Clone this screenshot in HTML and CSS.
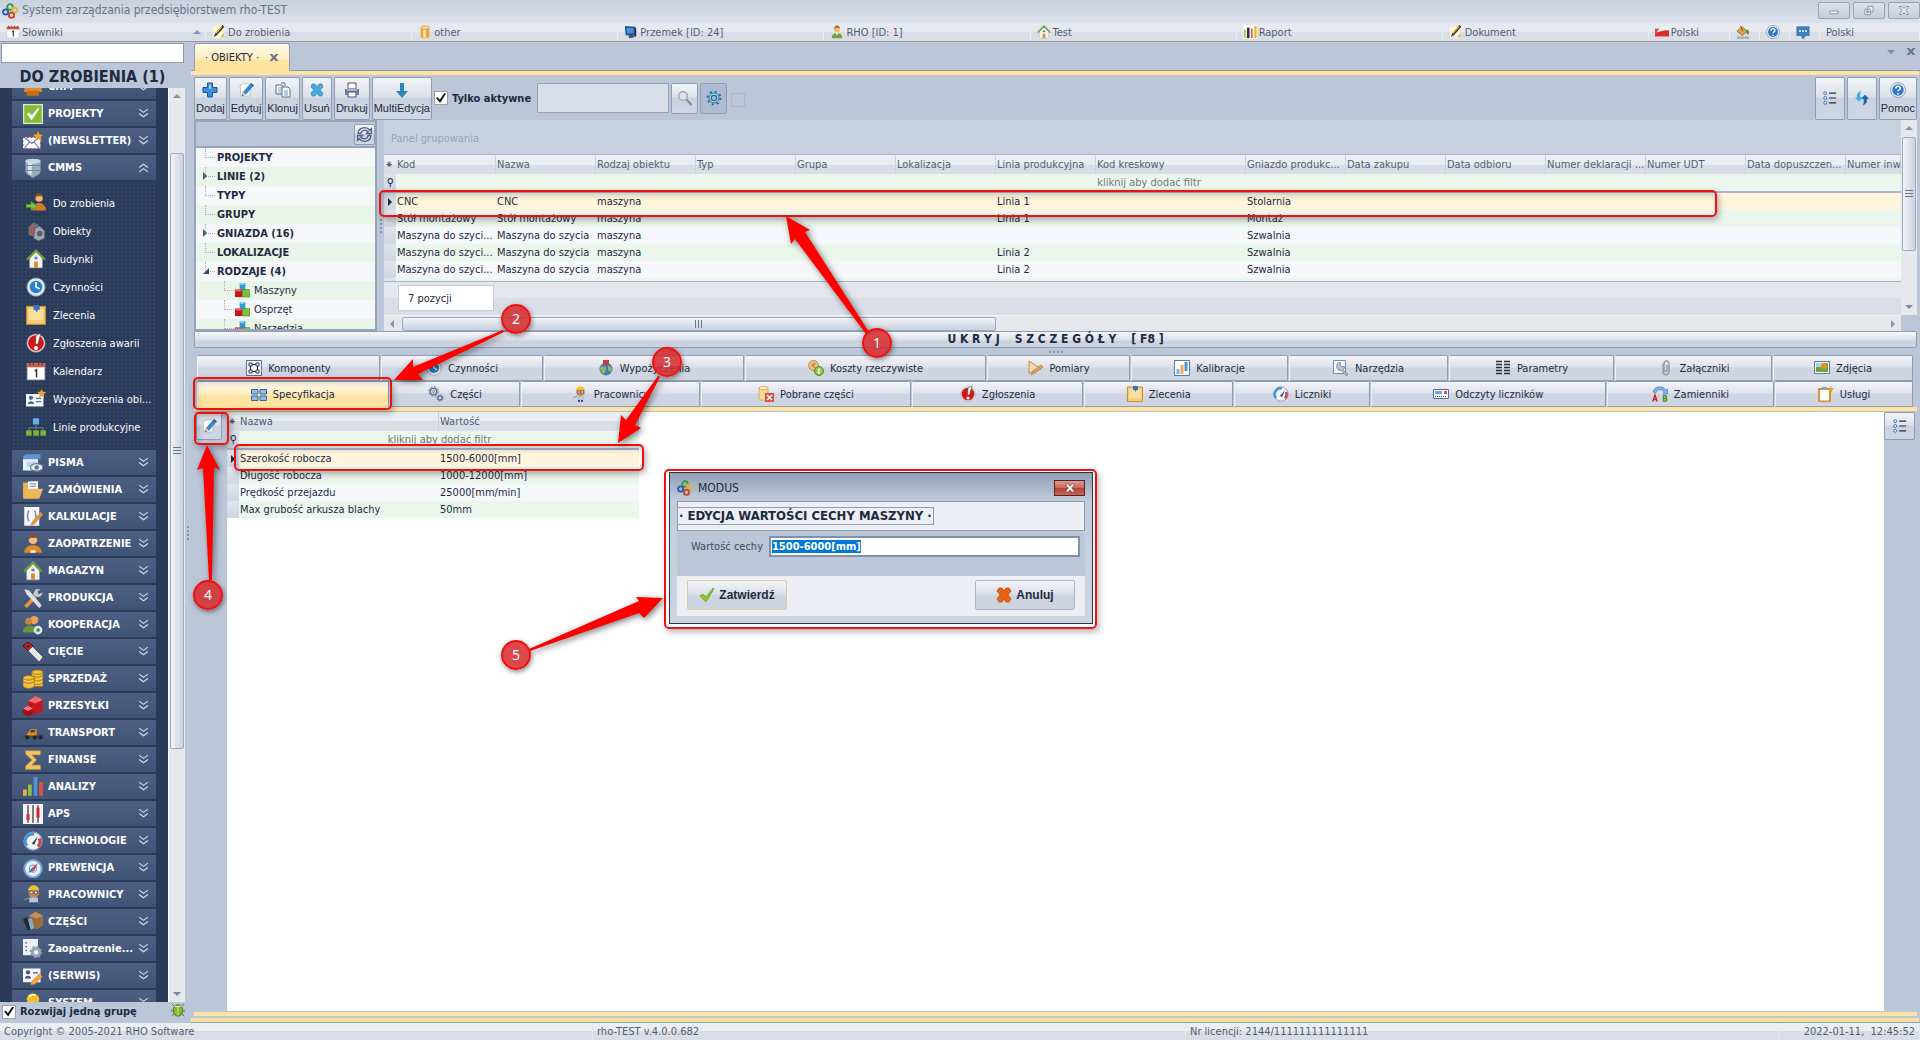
FILE: index.html
```html
<!DOCTYPE html>
<html lang="pl">
<head>
    <meta charset="utf-8">
    <meta name="viewport" content="width=device-width, initial-scale=1">
    <title>System zarządzania przedsiębiorstwem rho-TEST</title>
    <link rel="stylesheet" href="styles.css">
</head>
<body>
<svg class="sprite" aria-hidden="true">
    <symbol id="logo" viewBox="0 0 16 16"><g fill="none" stroke-width="1.8"><circle cx="8" cy="4" r="2.800" stroke="#2f9a3c"/><circle cx="3.600" cy="9" r="2.600" stroke="#2a56b5"/><circle cx="12.400" cy="7" r="2.600" stroke="#e0b52c"/><circle cx="9.500" cy="12.300" r="2.600" stroke="#cc4422"/></g></symbol>
    <symbol id="calendar" viewBox="0 0 16 16"><path d="M1 2h14v13H1z" fill="#fdfdfd" stroke="#b8bccb" stroke-width=".6"/><path d="M1 2h14v3H1z" fill="#d3523c"/><path d="M3 1v2M6 1v2M10 1v2M13 1v2" stroke="#7a2c20"/><path d="M7 8l1.4-1v6" fill="none" stroke="#333" stroke-width="1.2"/></symbol>
    <symbol id="pencil" viewBox="0 0 16 16"><path d="M1 2l12 0v13H1z" fill="#fbf7df"/><path d="M2 14l2-5 8-9 2 2-8 9z" fill="#2b2b2b"/><path d="M4 9l7-8 1 1-7 8z" fill="#f0c020"/><path d="M9 14l5-5-1 5z" fill="#cabb6a"/></symbol>
    <symbol id="db" viewBox="0 0 16 16"><path d="M3 3v10c0 3 10 3 10 0V3z" fill="#e9a63a"/><path d="M6 3v11.500h3V3z" fill="#fbe3ae"/><ellipse cx="8" cy="3" rx="5" ry="2" fill="#fbdc9b" stroke="#b87a1c" stroke-width=".6"/></symbol>
    <symbol id="monitor" viewBox="0 0 16 16"><path d="M1 1l12 1v9L2 12z" fill="#1d4f94"/><path d="M3 3l8 .5v6L3.500 10z" fill="#4c8fd9"/><path d="M12 2l2 2v9h-3v-2h1z" fill="#30343c"/><path d="M5 12l5-1 2 3-6 1z" fill="#454b58"/></symbol>
    <symbol id="user" viewBox="0 0 16 16"><circle cx="8" cy="5" r="3.300" fill="#efb77a"/><path d="M4.500 5c0-6 7-6 7 0l-1-2H6z" fill="#a86420"/><path d="M2 15c0-5 3-6 6-6s6 1 6 6z" fill="#6da33a"/><path d="M6.500 9L8 12l1.500-3z" fill="#fff"/></symbol>
    <symbol id="agent" viewBox="0 0 16 16"><circle cx="8" cy="4.500" r="3.500" fill="#f3bd84"/><path d="M4.300 5c0-6 7.400-6 7.400 0l-1-2H6z" fill="#8f4a18"/><path d="M1 15c0-4 3-6 7-6s7 2 7 6z" fill="#e08a22"/><path d="M6 13h4v2H6z" fill="#fff3d6"/></symbol>
    <symbol id="agentgo" viewBox="0 0 16 16"><circle cx="10.500" cy="4" r="3" fill="#f0b67c"/><path d="M7.300 4c0-5 6.400-5 6.400 0l-1-1.500H9z" fill="#94501d"/><path d="M5 14c0-4 3-6 5.500-6S16 10 16 14z" fill="#d27b25"/><path d="M0 9h4V6.500L9 10.500 4 14v-2.500H0z" fill="#7cc242" stroke="#47861e" stroke-width=".5"/></symbol>
    <symbol id="house" viewBox="0 0 16 16"><path d="M3 7l5-5 5 5v8H3z" fill="#f6f3ea" stroke="#b4b9c6" stroke-width=".5"/><path d="M.8 8.500L8 1.300l7.200 7.200" fill="none" stroke="#6d9c39" stroke-width="1.700"/><path d="M6.500 10h3v5h-3z" fill="#d88a3f"/><path d="M6.800 6.200h2.400v2H6.800z" fill="#4b7ed1"/></symbol>
    <symbol id="bars" viewBox="0 0 16 16"><path d="M0 0h16v16H0z" fill="#fff"/><path d="M1 5h2v10H1z" fill="#a7c520"/><path d="M4.500 3h3v12h-3z" fill="#28324b"/><path d="M9 4h2v11H9z" fill="#d9574e"/><path d="M13 1h2.500v14H13z" fill="#edb800"/></symbol>
    <symbol id="flag" viewBox="0 0 16 16"><path d="M0 3c5 2 9-2 16 0v10H0z" fill="#f4f4f4"/><path d="M0 9c5-1 8-3 16-3v7H0z" fill="#d92c2c"/><path d="M0 4l5 0-5 8z" fill="#e25151"/></symbol>
    <symbol id="paint" viewBox="0 0 16 16"><path d="M1 7l6-5 6 5-6 5z" fill="#e2a343" stroke="#7d4e14" stroke-width=".7"/><path d="M5 1l3 6" stroke="#6d401b"/><path d="M12 5c4 1 3 4 2 6-2 0-3-4-2-6z" fill="#4c9a2f"/><path d="M1 13h14v3H1z" fill="#aeb2b8"/></symbol>
    <symbol id="help" viewBox="0 0 16 16"><circle cx="8" cy="8" r="7.500" fill="#e8edf5" stroke="#76829a" stroke-width=".7"/><circle cx="8" cy="8" r="5.700" fill="#2f76cd"/><path d="M5.800 6.500c0-3 4.500-3 4.500-.3C10.300 8 8 7.800 8 9.500M8 11v1.500" fill="none" stroke="#fff" stroke-width="1.500"/></symbol>
    <symbol id="chat" viewBox="0 0 16 16"><path d="M1 2h14v10h-4l-3 4-2-4H1z" fill="#3b83c0" stroke="#285d95" stroke-width=".7"/><path d="M3.500 6h2v2h-2zM7 6h2v2H7zM10.500 6h2v2h-2z" fill="#eef"/></symbol>
    <symbol id="plus" viewBox="0 0 16 16"><path d="M5.500 1h5v4.500H15v5h-4.500V15h-5v-4.500H1v-5h4.500z" fill="#3d8fdd" stroke="#17559c"/><path d="M7 2.500h2v4.500H7z" fill="#9bd0fa"/></symbol>
    <symbol id="edit" viewBox="0 0 16 16"><path d="M2 3l7-2 3 2v11H3z" fill="#fff" stroke="#a9adb5" stroke-width=".7"/><path d="M4 14l1-4 7-8 3 2.500-7 8z" fill="#2d86d8"/><path d="M4 14l1-4 3 2.500z" fill="#e9c792"/><path d="M4 14l.5-1.500 1 .8z" fill="#222"/><path d="M12 2l1-1 3 2.500-1 1z" fill="#244a79"/></symbol>
    <symbol id="clone" viewBox="0 0 16 16"><path d="M1 3h6l2 2v7H1z" fill="#f4f8fc" stroke="#54718e"/><path d="M3 6h4M3 8h4M3 10h4" stroke="#7693ae" stroke-width=".8"/><path d="M6 1h4v3M9 5h4l2 2v8H7V5z" fill="#fff" stroke="#54718e"/><path d="M9 9h4M9 11h4M9 13h4" stroke="#3e7cb1" stroke-width=".8"/></symbol>
    <symbol id="cross" viewBox="0 0 16 16"><path d="M3 2l3 0 2 3 2-3h3l1 3-3 3 3 3-1 3h-3l-2-3-2 3H3l-1-3 3-3-3-3z" fill="#49a9dc" stroke="#217db5" stroke-width=".6"/></symbol>
    <symbol id="printer" viewBox="0 0 16 16"><path d="M4 1h8v6H4z" fill="#fff" stroke="#556"/><path d="M1 7h14v6H1z" fill="#6c7ea4"/><path d="M4 10h8v5H4z" fill="#fff" stroke="#44558a"/><path d="M3 8h10" stroke="#dfe6f4"/></symbol>
    <symbol id="down" viewBox="0 0 16 16"><path d="M6 1h4v8h4l-6 7-6-7h4z" fill="#2c88b6"/></symbol>
    <symbol id="lens" viewBox="0 0 16 16"><circle cx="6" cy="6" r="4.300" fill="#dfe1e5" stroke="#9b9fa8" stroke-width="1.300"/><path d="M9.500 9.500l5 5.500" stroke="#8b8e95" stroke-width="2.200"/></symbol>
    <symbol id="gear" viewBox="0 0 16 16"><circle cx="8" cy="8" r="6.500" fill="none" stroke="#186b97" stroke-width="1.800" stroke-dasharray="2 3.105"/><circle cx="8" cy="8" r="5" fill="#b9d9ea" stroke="#1b79a8" stroke-width="1"/><circle cx="8" cy="8" r="2.700" fill="#adbcd2" stroke="#1b6c99" stroke-width="1.200"/></symbol>
    <symbol id="list" viewBox="0 0 16 16"><g fill="#dcebfb" stroke="#3c6db4"><circle cx="2.500" cy="2.500" r="1.700"/><circle cx="2.500" cy="8" r="1.700"/><circle cx="2.500" cy="13.500" r="1.700"/></g><path d="M7 2.500h8M7 8h8M7 13.500h8" stroke="#222c3c" stroke-width="1.400"/></symbol>
    <symbol id="sync" viewBox="0 0 16 16"><path d="M7 0C3 1 2 4 2.500 7H0l4.500 5L9 7H6.200C5.500 4.500 6 2 7 0z" fill="#3eb0ec"/><path d="M9 16c4-1 5-4 4.500-7H16l-4.500-5L7 9h2.800c.7 2.500.2 5-.8 7z" fill="#1666a8"/></symbol>
    <symbol id="refresh" viewBox="0 0 16 16"><g fill="none" stroke="#51628b" stroke-width="1.300"><path d="M2 7c0-6 8-7 11-3l1.500-1.500V7H10l1.500-1.500C9 3 5 4 4.500 7z"/><path d="M14 9c0 6-8 7-11 3l-1.500 1.500V9H6l-1.500 1.500C7 13 11 12 11.500 9z"/></g></symbol>
    <symbol id="cubes" viewBox="0 0 16 16"><path d="M5 0h6v8H5z" fill="#2a9bd5"/><path d="M5 0h6l-2 2H6z" fill="#8bd0ef"/><path d="M0 7h8v8H0z" fill="#c8141c"/><path d="M8 7h8v8H8z" fill="#7bbf3a" stroke="#3c7c1e" stroke-width=".5"/><path d="M0 7h8L6 9H1z" fill="#ee6464"/></symbol>
    <symbol id="check" viewBox="0 0 16 16"><path d="M1 9l3-2 3 3 7-9 1 1-8 13z" fill="#8cc821" stroke="#5c9a12" stroke-width=".6"/></symbol>
    <symbol id="cancel" viewBox="0 0 16 16"><path d="M3 1h3l2 3 2-3h3l2 3-3 4 3 4-2 3h-3l-2-3-2 3H3l-2-3 3-4-3-4z" fill="#e8630f" stroke="#b04405" stroke-width=".7"/></symbol>
    <symbol id="gift" viewBox="0 0 16 16"><path d="M1 8h14v4H1z" fill="#e18a26"/><path d="M3 11h10v4H3z" fill="#c66e15"/><circle cx="8" cy="6" r="3" fill="#e9a04a"/></symbol>
    <symbol id="tick" viewBox="0 0 16 16"><path d="M.5.500h15v15H.500z" fill="#84bd38" stroke="#d9e9c0"/><path d="M3 8l2-1 2 2 5-6 1 1-6 9z" fill="#fff"/></symbol>
    <symbol id="mail" viewBox="0 0 16 16"><path d="M0 5h14v9H0z" fill="#fff" stroke="#d0495a" stroke-dasharray="1.500 1.500"/><path d="M1 5l6 5 6-5M1 14l4-5M13 14L9 9" fill="none" stroke="#5577b5" stroke-width=".9"/><path d="M12 0l1 2.500L16 3l-2 2 1 3-3-2-2 2 0-3-2-2 3-.5z" fill="#f0a02a"/></symbol>
    <symbol id="tank" viewBox="0 0 16 16"><path d="M2 2v9c1 3 4 3 6 5 2-2 5-2 6-5V2z" fill="#9aa9b8"/><path d="M4 3v9l3 2V3z" fill="#dbe6ef"/><ellipse cx="8" cy="2.500" rx="6" ry="2" fill="#cdd8e2"/><path d="M2 6h12M2 10h12" stroke="#5f8fc0" stroke-width=".8"/></symbol>
    <symbol id="machine" viewBox="0 0 16 16"><path d="M2 5l4-4 4 2v11l-8-3z" fill="#68737f"/><path d="M7 6l4-2 4 4v6l-5 2-4-2z" fill="#9aa6b3" stroke="#444d59" stroke-width=".6"/><path d="M4 4v7M6 3v8" stroke="#c64d3c"/><circle cx="11" cy="10" r="2.200" fill="#56616d"/></symbol>
    <symbol id="clock" viewBox="0 0 16 16"><circle cx="8" cy="8" r="7.300" fill="#e4e9ef" stroke="#8892a3" stroke-width=".6"/><circle cx="8" cy="8" r="5" fill="#2480d3"/><path d="M8 4v4l3 1.500" fill="none" stroke="#fff" stroke-width="1.300"/></symbol>
    <symbol id="note" viewBox="0 0 16 16"><path d="M.5 1h15v14.500H.5z" fill="#f6cd79" stroke="#c78a2c"/><path d="M2 3h12v9H2z" fill="#fbdf9f"/><path d="M6 0h5v4H9.500L8.500 6 7.500 4H6z" fill="#3d73b8"/></symbol>
    <symbol id="alarm" viewBox="0 0 16 16"><circle cx="8" cy="8" r="7.300" fill="#e6e6e6" stroke="#9a9a9a" stroke-width=".5"/><circle cx="8" cy="8" r="6.300" fill="#d5141a"/><path d="M8 2l4-2-2.500 9h-2z" fill="#fff" stroke="#333" stroke-width=".5"/><circle cx="8" cy="12" r="1.600" fill="#fff"/></symbol>
    <symbol id="card" viewBox="0 0 16 16"><path d="M0 4h14v10H0z" fill="#f3f6fb"/><circle cx="4" cy="7" r="1.700" fill="#4b699c"/><path d="M1.500 12c0-3 5-3 5 0zM8 7h4v1H8zM8 9.500h4v1H8z" fill="#4b699c"/><path d="M12.500 0l1 2 2.500.5-2 2 .5 2.500-2-1.500-2 1.500.5-2.500-2-2 2.500-.5z" fill="#eea02c"/></symbol>
    <symbol id="cardedit" viewBox="0 0 16 16"><path d="M0 2h14v11H0z" fill="#f3f6fb"/><circle cx="4" cy="5" r="1.700" fill="#42577f"/><path d="M1.500 10c0-3 5-3 5 0zM8 5h4v1H8z" fill="#42577f"/><path d="M6 15l1-3 6-6 2.500 2.500-6 6z" fill="#eda23b"/></symbol>
    <symbol id="lines" viewBox="0 0 16 16"><path d="M5.500 1h5v5h-5z" fill="#5fb0ec"/><path d="M8 6v4M2.500 11V8.500h11V11" stroke="#65718a" fill="none"/><path d="M0 10.500h4.500V15H0zM5.800 10.500h4.500V15H5.800zM11.500 10.500H16V15h-4.500z" fill="#7ab42f"/></symbol>
    <symbol id="window" viewBox="0 0 16 16"><path d="M0 3h12v11H0z" fill="#eaf2fb"/><path d="M2 1h12v4H0V3z" fill="#5c96d6"/><path d="M3 7h8v4H3z" fill="#b8d4f0"/><ellipse cx="11" cy="11.500" rx="5" ry="3" fill="#eee" stroke="#6f7b8d"/><circle cx="11" cy="11.500" r="1.800" fill="#4d7dad"/></symbol>
    <symbol id="folder" viewBox="0 0 16 16"><path d="M0 2h5l1 2v10H0z" fill="#e9b053"/><path d="M4 1h8v9H4z" fill="#f6f8fc"/><path d="M5.500 3h5M5.500 5h5" stroke="#8498bd"/><path d="M3 7h13l-3 8H0z" fill="#f0b95f"/></symbol>
    <symbol id="code" viewBox="0 0 16 16"><path d="M1 0h12v15H1z" fill="#f6f8fc"/><path d="M5 3c-2 0 0 4-2 4 2 0 0 4 2 4M9 3c2 0 0 4 2 4-2 0 0 4-2 4" fill="none" stroke="#5b7cb4"/><path d="M6 15l1-3 7-8 2 2-7 8z" fill="#e9913a"/></symbol>
    <symbol id="tools" viewBox="0 0 16 16"><path d="M2 15l8-8" stroke="#e09a41" stroke-width="3" fill="none"/><path d="M1 1l4 1 10 12-2 2L3 5z" fill="#dfe3e8"/><path d="M8 5l2-4 4 0-2.500 2 1 2 3-1.500c0 3-3 4-5 3.500z" fill="#c4ccd6"/></symbol>
    <symbol id="people" viewBox="0 0 16 16"><circle cx="9" cy="4" r="3.300" fill="#e9a55f"/><circle cx="4.500" cy="5" r="2.800" fill="#c8853f"/><path d="M0 14c0-5 4-6 8-5 4 0 5 3 5 5z" fill="#679638"/><circle cx="12" cy="12" r="2.500" fill="none" stroke="#dfe5ee" stroke-width="2"/></symbol>
    <symbol id="saw" viewBox="0 0 16 16"><path d="M6 2l10 10-3 4L3 6z" fill="#e8e8e8" stroke="#333" stroke-width=".5"/><path d="M0 3l4-3 4 3-4 4z" fill="#cf1d24" stroke="#200" stroke-width=".6"/><circle cx="4" cy="3.300" r="1.200" fill="#333"/></symbol>
    <symbol id="coins" viewBox="0 0 16 16"><g fill="#efc23f" stroke="#9c6b0f" stroke-width=".6"><path d="M7 2v12h9V2z"/><ellipse cx="11.500" cy="2.500" rx="4.500" ry="1.800"/><path d="M7 5c3 2 6 2 9 0M7 8c3 2 6 2 9 0M7 11c3 2 6 2 9 0" fill="none"/><path d="M0 7v7c2 2 7 2 9 0V7z"/><ellipse cx="4.500" cy="7" rx="4.500" ry="1.800"/><path d="M0 10c3 2 6 2 9 0" fill="none"/></g></symbol>
    <symbol id="boxes" viewBox="0 0 16 16"><path d="M4 4l6-4 6 3v9l-6 3-6-3z" fill="#c4161c"/><path d="M4 4l6-4 6 3-6 3z" fill="#ef6a6a"/><path d="M0 10l4-2 4 2v5l-4 1-4-2z" fill="#a80f15"/><path d="M0 10l4-2 4 2-4 2z" fill="#f08080"/></symbol>
    <symbol id="truck" viewBox="0 0 16 16"><path d="M0 9.500h16v2H0z" fill="#444"/><path d="M3 9l3-4h5v5H3z" fill="#e98718"/><path d="M6.500 5.500h3v2h-4z" fill="#39424f"/><circle cx="3.500" cy="11.500" r="1.600" fill="#222"/><circle cx="9.500" cy="11.500" r="1.600" fill="#222"/><circle cx="14" cy="11.500" r="1.600" fill="#222"/></symbol>
    <symbol id="sigma" viewBox="0 0 16 16"><path d="M2 .5h12V4H7l4 4-4 4h7v3.500H2V13l5-5-5-5z" fill="#f4c360" stroke="#b9822a" stroke-width=".5"/></symbol>
    <symbol id="chart" viewBox="0 0 16 16"><path d="M0 10h3v5H0z" fill="#f0a94c"/><path d="M4 6h3v9H4z" fill="#8fbf3f"/><path d="M8.500 0h3v15h-3z" fill="#4d95d8"/><path d="M12.800 4H16v11h-3.200z" fill="#d8503f"/></symbol>
    <symbol id="sliders" viewBox="0 0 16 16"><path d="M0 0h16v16H0z" fill="#f3f3f5"/><path d="M4 1v14M8 1v14M12 1v14" stroke="#333"/><path d="M2.800 8h2.400v5H2.800zM10.800 3h2.400v8h-2.400z" fill="#d3252b"/></symbol>
    <symbol id="gauge" viewBox="0 0 16 16"><circle cx="8" cy="8" r="7.200" fill="#f2f5f9" stroke="#8ca5c5"/><path d="M3 12A6 6 0 0 1 9 2.500" fill="none" stroke="#4f93d4" stroke-width="2.500"/><path d="M13 6a6 6 0 0 1-1 6.500" fill="none" stroke="#cc4640" stroke-width="2.500"/><path d="M7 10l5-6-3 7z" fill="#33435c"/></symbol>
    <symbol id="compass" viewBox="0 0 16 16"><circle cx="8" cy="8.500" r="7" fill="#e8f1fb" stroke="#6aa1db" stroke-width="1.600"/><circle cx="8" cy="8.500" r="2.800" fill="#fff" stroke="#6fa2d6"/><path d="M4 12l3-4 2 2z" fill="#3d70b3"/><path d="M12 4L7 8l2 2z" fill="#d6412e"/></symbol>
    <symbol id="worker" viewBox="0 0 16 16"><circle cx="8.500" cy="6" r="4.300" fill="#c98c4f"/><path d="M4 4c1-5 8-5 9 0z" fill="#f2c12e"/><path d="M5.500 5h2.500v2H5.500zM9 5h2.500v2H9z" fill="#f5f5f5" stroke="#333" stroke-width=".5"/><path d="M5 10h7v4H5z" fill="#b7c4dc"/><path d="M6 14h2v2H6zM9 14h2v2H9z" fill="#2c4f92"/><path d="M1 12l4-2" stroke="#888"/></symbol>
    <symbol id="parts" viewBox="0 0 16 16"><path d="M0 6l3-2 4 9-3 2z" fill="#23272d"/><path d="M5 3l5-3 6 3v8l-5 3-6-3z" fill="#9a6b3c"/><path d="M5 3l5-3 6 3-5 2z" fill="#c3935e"/><path d="M4 6l3-1 2 8-3 1z" fill="#8aa9c9"/></symbol>
    <symbol id="docgear" viewBox="0 0 16 16"><path d="M0 0h12v13H0z" fill="#edf1f7"/><path d="M2 3h1M2 6h1M2 9h1" stroke="#333"/><circle cx="10.500" cy="10.500" r="3" fill="#edf1f7" stroke="#9aa4b4" stroke-width="2.400"/><circle cx="10.500" cy="10.500" r="4.600" fill="none" stroke="#7f8998" stroke-dasharray="1.800 1.810"/></symbol>
    <symbol id="bulb" viewBox="0 0 16 16"><path d="M3 5c0-6 10-6 10 0 0 3-3 4-3 7H6c0-3-3-4-3-7z" fill="#f5c223"/><path d="M5 3c1-2 4-2 5-1" fill="none" stroke="#fff3b8" stroke-width="1.500"/></symbol>
    <symbol id="bug" viewBox="0 0 16 16"><path d="M1 1l3 3M15 1l-3 3M0 9h3M16 9h-3M1 15l3-3M15 15l-3-3" stroke="#4f6a2b"/><ellipse cx="8" cy="8.500" rx="5.500" ry="6.500" fill="#84b92f" stroke="#46701a"/><path d="M8 4v10M4 4h8" stroke="#e2f2bf"/></symbol>
    <symbol id="component" viewBox="0 0 16 16"><path d="M.5.500h15v15H.500z" fill="#f2f5fa" stroke="#5a6f9c"/><path d="M4.500 4.500h7v7h-7z" fill="none" stroke="#1e2c45"/><path d="M3 3h3v3H3zM10 3h3v3h-3zM3 10h3v3H3zM10 10h3v3h-3z" fill="#f2f5fa" stroke="#1e2c45" stroke-width=".9"/></symbol>
    <symbol id="globe" viewBox="0 0 16 16"><circle cx="8" cy="9" r="6.500" fill="#3f7fb9"/><path d="M3 6l5 1 0 4-3 3-3-5zM10 5l4 3-1 4-3-2z" fill="#8fb860"/><path d="M5 0h6v5H5z" fill="#cf3d32"/></symbol>
    <symbol id="money" viewBox="0 0 16 16"><circle cx="5.500" cy="5.500" r="5" fill="#f2c283" stroke="#c78b3d"/><path d="M7.500 3.500c-3-1-4 4 0 4M3.500 5h3" fill="none" stroke="#a8672a"/><circle cx="11" cy="11" r="4.500" fill="#8cc63f" stroke="#4f8a1d"/><path d="M12.500 9.500c-3-1-3 1-1.500 1.500s1 2-1.500 1.300M11 8v6" fill="none" stroke="#fff"/></symbol>
    <symbol id="measure" viewBox="0 0 16 16"><path d="M2 1v12l12-4z" fill="#f6d9a0" stroke="#cc8b33"/><path d="M4.500 5v5l5-1.500z" fill="#d9deea"/><path d="M4 15l2-4 8-6 2 2-8 6z" fill="#e3a04d" stroke="#9b6424" stroke-width=".5"/></symbol>
    <symbol id="calib" viewBox="0 0 16 16"><path d="M.5.500h15v15H.500z" fill="#fff" stroke="#5574a8"/><path d="M2.500 9h3v5h-3z" fill="#79b0e4"/><path d="M6.500 5h3v9h-3z" fill="#efa45a"/><path d="M10.500 2h3v9h-3z" fill="#4f8fd6"/></symbol>
    <symbol id="wrench" viewBox="0 0 16 16"><path d="M.5.500h12v13H.5z" fill="#f4f8fd" stroke="#6d8fbd"/><path d="M4 5c0-2 2-3 4-2L7 5l2 2 2-1c1 2 0 3-1 4l5 4-1.500 2L8 10C5 11 3 8 4 5z" fill="#b9c5d6" stroke="#4d5f7d" stroke-width=".6"/></symbol>
    <symbol id="params" viewBox="0 0 16 16"><path d="M1 1.500h6M9 1.500h6M1 4.500h6M9 4.500h6M1 7.500h6M9 7.500h6M1 10.500h6M9 10.500h6M1 13.500h6M9 13.500h6" stroke="#2a3140" stroke-width="1.500"/></symbol>
    <symbol id="clip" viewBox="0 0 16 16"><path d="M5 4v7c0 5 6 5 6 0V4c0-4-5-4-5 0v6c0 2 3 2 3 0V5" fill="none" stroke="#9b9ea5" stroke-width="1.600"/></symbol>
    <symbol id="photo" viewBox="0 0 16 16"><path d="M.5 1.500h15v12H.5z" fill="#fff" stroke="#5a77a8"/><path d="M2 3h12v9H2z" fill="#6da63b"/><path d="M2 3h6v4H2z" fill="#a8d3ef"/><circle cx="10" cy="6" r="3" fill="#ee8e25"/></symbol>
    <symbol id="tiles" viewBox="0 0 16 16"><path d="M.5 2.500h6.500v4.500H.5zM9 2.500h6.500v4.500H9zM.5 9h6.500v4.500H.5zM9 9h6.500v4.500H9z" fill="#8cbdec" stroke="#39649b"/></symbol>
    <symbol id="gears" viewBox="0 0 16 16"><g fill="none" stroke="#64779a"><circle cx="5.500" cy="5.500" r="3.300" stroke-width="1.600"/><circle cx="5.500" cy="5.500" r="4.800" stroke-dasharray="1.900 1.870"/><circle cx="5.500" cy="5.500" r="1" stroke-width=".8"/><circle cx="12" cy="12" r="2.100" stroke-width="1.500"/><circle cx="12" cy="12" r="3.300" stroke-dasharray="1.300 1.292"/></g></symbol>
    <symbol id="dbx" viewBox="0 0 16 16"><path d="M1 2v10c0 3 9 3 9 0V2z" fill="#f4d89e" stroke="#c28a33" stroke-width=".6"/><ellipse cx="5.500" cy="2" rx="4.500" ry="1.700" fill="#fdf0cd" stroke="#c28a33" stroke-width=".6"/><path d="M7 7h9v9H7z" fill="#dc5138"/><path d="M9 9l5 5M14 9l-5 5" stroke="#fff" stroke-width="1.500"/></symbol>
    <symbol id="reading" viewBox="0 0 16 16"><path d="M.5 3.500h15v9H.5z" fill="#f5f8fc" stroke="#5470a5"/><path d="M2 5h7v3H2z" fill="#6fa5e2"/><path d="M11 5h3v3h-3z" fill="#d35147"/><path d="M2 10.500h12" stroke="#44597f" stroke-dasharray="1 1"/></symbol>
    <symbol id="swap" viewBox="0 0 16 16"><path d="M1 6c1-6 10-7 13-2l2-1v5h-5l1-2C10 3 5 3 4 7z" fill="#7eb1e2" stroke="#3c6fa8" stroke-width=".5"/><path d="M.8 15.500L3 9l2.200 6.500M1.500 13.500h3" fill="none" stroke="#c2272d" stroke-width="1.400"/><path d="M11.500 9v6.500M11.500 9.500c4-.5 4 2.800 0 2.800 4.500 0 4.500 3.200 0 3" fill="none" stroke="#4c8f22" stroke-width="1.400"/></symbol>
    <symbol id="service" viewBox="0 0 16 16"><path d="M1 3h11v12.500H1z" fill="#fff" stroke="#d58b2a" stroke-width="1.800"/><path d="M4 1h5v3H4z" fill="#8fa0b8"/><path d="M12.500 0l1 2 2.500.5-2 2 .5 2.500-2-1.500-2 1.500.5-2.500-2-2 2.500-.5z" fill="#eea02c"/></symbol>
    <symbol id="chev" viewBox="0 0 10 10"><path d="M1 1l4 3 4-3M1 5l4 3 4-3" fill="none" stroke="#d5dbe8" stroke-width="1"/></symbol>
    <symbol id="xmark" viewBox="0 0 10 10"><path d="M0 1h3L5 3.200 7 1h3L6.700 5 10 9H7L5 6.800 3 9H0l3.300-4z"/></symbol>
</svg>

<header class="titlebar">
    <svg class="ico"><use href="#logo"/></svg>
    <h1>System zarządzania przedsiębiorstwem rho-TEST</h1>
    <div class="win-btns">
        <button aria-label="Minimalizuj"><svg viewBox="0 0 12 12"><path d="M1.500 6.500h9v3h-9z"/></svg></button>
        <button aria-label="Przywróć"><svg viewBox="0 0 12 12"><path d="M4.500 1.500h6v6h-6zM1.500 4.500h6v6h-6zM3.500 6.500h2v2h-2z"/></svg></button>
        <button aria-label="Zamknij"><svg viewBox="-1 0 12 10"><use href="#xmark" width="10" height="10"/></svg></button>
    </div>
</header>

<nav class="menubar">
    <a href="#"><svg class="ico"><use href="#calendar"/></svg>Słowniki<i class="tri up"></i></a>
    <a href="#"><svg class="ico"><use href="#pencil"/></svg>Do zrobienia</a>
    <a href="#"><svg class="ico"><use href="#db"/></svg>other</a>
    <a href="#"><svg class="ico"><use href="#monitor"/></svg>Przemek [ID: 24]</a>
    <a href="#"><svg class="ico"><use href="#user"/></svg>RHO [ID: 1]</a>
    <a href="#"><svg class="ico"><use href="#house"/></svg>Test</a>
    <a href="#"><svg class="ico"><use href="#bars"/></svg>Raport</a>
    <a href="#"><svg class="ico"><use href="#pencil"/></svg>Dokument</a>
    <a href="#"><svg class="ico"><use href="#flag"/></svg>Polski</a>
    <a href="#" aria-label="Kolory"><svg class="ico"><use href="#paint"/></svg></a>
    <a href="#" aria-label="Pomoc"><svg class="ico"><use href="#help"/></svg></a>
    <a href="#" aria-label="Wiadomości"><svg class="ico"><use href="#chat"/></svg></a>
    <a href="#">Polski</a>
</nav>

<div class="workspace">
    <aside class="sidebar">
        <input class="search" type="text" aria-label="Szukaj w menu">
        <h2>DO ZROBIENIA (1)</h2>
        <div class="side-body">
            <div class="side-list">
                <button class="group"><svg><use href="#gift"/></svg>CRM<svg class="chev"><use href="#chev"/></svg></button>
                <button class="group"><svg><use href="#tick"/></svg>PROJEKTY<svg class="chev"><use href="#chev"/></svg></button>
                <button class="group"><svg><use href="#mail"/></svg>(NEWSLETTER)<svg class="chev"><use href="#chev"/></svg></button>
                <button class="group open"><svg><use href="#tank"/></svg>CMMS<svg class="chev"><use href="#chev"/></svg></button>
                <div class="sub">
                    <a href="#"><svg><use href="#agentgo"/></svg>Do zrobienia</a>
                    <a href="#"><svg><use href="#machine"/></svg>Obiekty</a>
                    <a href="#"><svg><use href="#house"/></svg>Budynki</a>
                    <a href="#"><svg><use href="#clock"/></svg>Czynności</a>
                    <a href="#"><svg><use href="#note"/></svg>Zlecenia</a>
                    <a href="#"><svg><use href="#alarm"/></svg>Zgłoszenia awarii</a>
                    <a href="#"><svg><use href="#calendar"/></svg>Kalendarz</a>
                    <a href="#"><svg><use href="#card"/></svg>Wypożyczenia obi...</a>
                    <a href="#"><svg><use href="#lines"/></svg>Linie produkcyjne</a>
                </div>
                <button class="group"><svg><use href="#window"/></svg>PISMA<svg class="chev"><use href="#chev"/></svg></button>
                <button class="group"><svg><use href="#folder"/></svg>ZAMÓWIENIA<svg class="chev"><use href="#chev"/></svg></button>
                <button class="group"><svg><use href="#code"/></svg>KALKULACJE<svg class="chev"><use href="#chev"/></svg></button>
                <button class="group"><svg><use href="#agent"/></svg>ZAOPATRZENIE<svg class="chev"><use href="#chev"/></svg></button>
                <button class="group"><svg><use href="#house"/></svg>MAGAZYN<svg class="chev"><use href="#chev"/></svg></button>
                <button class="group"><svg><use href="#tools"/></svg>PRODUKCJA<svg class="chev"><use href="#chev"/></svg></button>
                <button class="group"><svg><use href="#people"/></svg>KOOPERACJA<svg class="chev"><use href="#chev"/></svg></button>
                <button class="group"><svg><use href="#saw"/></svg>CIĘCIE<svg class="chev"><use href="#chev"/></svg></button>
                <button class="group"><svg><use href="#coins"/></svg>SPRZEDAŻ<svg class="chev"><use href="#chev"/></svg></button>
                <button class="group"><svg><use href="#boxes"/></svg>PRZESYŁKI<svg class="chev"><use href="#chev"/></svg></button>
                <button class="group"><svg><use href="#truck"/></svg>TRANSPORT<svg class="chev"><use href="#chev"/></svg></button>
                <button class="group"><svg><use href="#sigma"/></svg>FINANSE<svg class="chev"><use href="#chev"/></svg></button>
                <button class="group"><svg><use href="#chart"/></svg>ANALIZY<svg class="chev"><use href="#chev"/></svg></button>
                <button class="group"><svg><use href="#sliders"/></svg>APS<svg class="chev"><use href="#chev"/></svg></button>
                <button class="group"><svg><use href="#gauge"/></svg>TECHNOLOGIE<svg class="chev"><use href="#chev"/></svg></button>
                <button class="group"><svg><use href="#compass"/></svg>PREWENCJA<svg class="chev"><use href="#chev"/></svg></button>
                <button class="group"><svg><use href="#worker"/></svg>PRACOWNICY<svg class="chev"><use href="#chev"/></svg></button>
                <button class="group"><svg><use href="#parts"/></svg>CZĘŚCI<svg class="chev"><use href="#chev"/></svg></button>
                <button class="group"><svg><use href="#docgear"/></svg>Zaopatrzenie...<svg class="chev"><use href="#chev"/></svg></button>
                <button class="group"><svg><use href="#cardedit"/></svg>(SERWIS)<svg class="chev"><use href="#chev"/></svg></button>
                <button class="group"><svg><use href="#bulb"/></svg>SYSTEM<svg class="chev"><use href="#chev"/></svg></button>
            </div>
            <div class="vscroll side-scroll"><i class="tri up"></i><div class="thumb"></div><i class="tri dn"></i></div>
        </div>
        <div class="side-foot">
            <input type="checkbox" class="tickbox" id="onegroup" checked>
            <label for="onegroup">Rozwijaj jedną grupę</label>
            <svg class="bug"><use href="#bug"/></svg>
        </div>
    </aside>
    <div class="split-v"><i></i></div>

    <main class="main">
        <div class="doc-tabs">
            <div class="doc-tab">· OBIEKTY ·<button aria-label="Zamknij kartę"><svg><use href="#xmark"/></svg></button></div>
            <div class="doc-ctl"><i class="tri dn"></i><svg><use href="#xmark"/></svg></div>
        </div>
        <div class="doc">
            <div class="toolbar">
                <button class="tool"><svg><use href="#plus"/></svg>Dodaj</button>
                <button class="tool"><svg><use href="#edit"/></svg>Edytuj</button>
                <button class="tool"><svg><use href="#clone"/></svg>Klonuj</button>
                <button class="tool"><svg><use href="#cross"/></svg>Usuń</button>
                <button class="tool"><svg><use href="#printer"/></svg>Drukuj</button>
                <button class="tool"><svg><use href="#down"/></svg>MultiEdycja</button>
                <input type="checkbox" class="tickbox" id="active" checked>
                <label for="active">Tylko aktywne</label>
                <input type="text" class="find" aria-label="Szukaj">
                <button class="small" aria-label="Szukaj"><svg><use href="#lens"/></svg></button>
                <button class="small pressed" aria-label="Ustawienia"><svg><use href="#gear"/></svg></button>
                <i class="blank"></i>
                <span class="push"></span>
                <button class="tool bare" aria-label="Lista"><svg><use href="#list"/></svg></button>
                <button class="tool bare" aria-label="Odśwież"><svg><use href="#sync"/></svg></button>
                <button class="tool"><svg><use href="#help"/></svg>Pomoc</button>
            </div>

            <div class="upper">
                <div class="tree">
                    <div class="tree-head"><button aria-label="Odśwież drzewo"><svg><use href="#refresh"/></svg></button></div>
                    <ul>
                        <li>PROJEKTY</li>
                        <li class="closed">LINIE (2)</li>
                        <li>TYPY</li>
                        <li>GRUPY</li>
                        <li class="closed">GNIAZDA (16)</li>
                        <li>LOKALIZACJE</li>
                        <li class="opened">RODZAJE (4)</li>
                        <li class="leaf"><svg><use href="#cubes"/></svg>Maszyny</li>
                        <li class="leaf"><svg><use href="#cubes"/></svg>Osprzęt</li>
                        <li class="leaf"><svg><use href="#cubes"/></svg>Narzędzia</li>
                    </ul>
                </div>
                <div class="split-v inner"><i></i></div>
                <div class="gridbox">
                    <div class="grid-area">
                        <div class="group-panel">Panel grupowania</div>
                        <div class="grid-clip">
                        <table class="grid objects">
                            <colgroup><col class="ind"><col><col><col><col><col><col><col><col class="wide"><col><col><col><col><col><col><col class="last"></colgroup>
                            <thead>
                                <tr><th>⁕</th><th>Kod</th><th>Nazwa</th><th>Rodzaj obiektu</th><th>Typ</th><th>Grupa</th><th>Lokalizacja</th><th>Linia produkcyjna</th><th>Kod kreskowy</th><th>Gniazdo produkc...</th><th>Data zakupu</th><th>Data odbioru</th><th>Numer deklaracji ...</th><th>Numer UDT</th><th>Data dopuszczen...</th><th>Numer inwe</th></tr>
                            </thead>
                            <tbody>
                                <tr class="filter"><td>⚲</td><td colspan="15">kliknij aby dodać filtr</td></tr>
                                <tr class="sel"><td><i class="tri rt"></i></td><td>CNC</td><td>CNC</td><td>maszyna</td><td></td><td></td><td></td><td>Linia 1</td><td></td><td>Stolarnia</td><td></td><td></td><td></td><td></td><td></td><td></td></tr>
                                <tr><td></td><td>Stół montażowy</td><td>Stół montażowy</td><td>maszyna</td><td></td><td></td><td></td><td>Linia 1</td><td></td><td>Montaż</td><td></td><td></td><td></td><td></td><td></td><td></td></tr>
                                <tr><td></td><td>Maszyna do szyci...</td><td>Maszyna do szycia</td><td>maszyna</td><td></td><td></td><td></td><td></td><td></td><td>Szwalnia</td><td></td><td></td><td></td><td></td><td></td><td></td></tr>
                                <tr><td></td><td>Maszyna do szyci...</td><td>Maszyna do szycia</td><td>maszyna</td><td></td><td></td><td></td><td>Linia 2</td><td></td><td>Szwalnia</td><td></td><td></td><td></td><td></td><td></td><td></td></tr>
                                <tr><td></td><td>Maszyna do szyci...</td><td>Maszyna do szycia</td><td>maszyna</td><td></td><td></td><td></td><td>Linia 2</td><td></td><td>Szwalnia</td><td></td><td></td><td></td><td></td><td></td><td></td></tr>
                                <tr><td></td><td colspan="15"></td></tr>
                            </tbody>
                        </table>
                        </div>
                        <div class="grid-foot"><span>7 pozycji</span></div>
                        <div class="hscroll"><i class="tri lt"></i><div class="thumb"></div><i class="tri rt"></i></div>
                    </div>
                    <div class="vscroll grid-scroll"><i class="tri up"></i><div class="thumb"></div><i class="tri dn"></i></div>
                </div>
            </div>

            <button class="toggle">U K R Y J &nbsp;&nbsp; S Z C Z E G Ó Ł Y &nbsp;&nbsp; [ F8 ]</button>
            <div class="split-h"><i></i></div>

            <div class="tabs">
                <div class="tab-row first">
                    <button><svg><use href="#component"/></svg>Komponenty</button>
                    <button><svg><use href="#clock"/></svg>Czynności</button>
                    <button><svg><use href="#globe"/></svg>Wypożyczenia</button>
                    <button><svg><use href="#money"/></svg>Koszty rzeczywiste</button>
                    <button><svg><use href="#measure"/></svg>Pomiary</button>
                    <button><svg><use href="#calib"/></svg>Kalibracje</button>
                    <button><svg><use href="#wrench"/></svg>Narzędzia</button>
                    <button><svg><use href="#params"/></svg>Parametry</button>
                    <button><svg><use href="#clip"/></svg>Załączniki</button>
                    <button><svg><use href="#photo"/></svg>Zdjęcia</button>
                </div>
                <div class="tab-row second">
                    <button class="on"><svg><use href="#tiles"/></svg>Specyfikacja</button>
                    <button><svg><use href="#gears"/></svg>Części</button>
                    <button><svg><use href="#worker"/></svg>Pracownicy</button>
                    <button><svg><use href="#dbx"/></svg>Pobrane części</button>
                    <button><svg><use href="#alarm"/></svg>Zgłoszenia</button>
                    <button><svg><use href="#note"/></svg>Zlecenia</button>
                    <button><svg><use href="#gauge"/></svg>Liczniki</button>
                    <button><svg><use href="#reading"/></svg>Odczyty liczników</button>
                    <button><svg><use href="#swap"/></svg>Zamienniki</button>
                    <button><svg><use href="#service"/></svg>Usługi</button>
                </div>
            </div>

            <div class="detail">
                <div class="strip"><button class="edit-btn" aria-label="Edytuj cechę"><svg><use href="#edit"/></svg></button></div>
                <div class="sheet">
                    <table class="grid specs">
                        <colgroup><col class="ind"><col><col></colgroup>
                        <thead><tr><th>⁕</th><th>Nazwa</th><th>Wartość</th></tr></thead>
                        <tbody>
                            <tr class="filter"><td>⚲</td><td colspan="2">kliknij aby dodać filtr</td></tr>
                            <tr class="sel"><td><i class="tri rt"></i></td><td>Szerokość robocza</td><td>1500-6000[mm]</td></tr>
                            <tr><td></td><td>Długość robocza</td><td>1000-12000[mm]</td></tr>
                            <tr><td></td><td>Prędkość przejazdu</td><td>25000[mm/min]</td></tr>
                            <tr><td></td><td>Max grubość arkusza blachy</td><td>50mm</td></tr>
                        </tbody>
                    </table>
                </div>
                <div class="strip right"><button class="edit-btn" aria-label="Lista"><svg><use href="#list"/></svg></button></div>
            </div>
        </div>
    </main>
</div>

<footer class="status">
    <span>Copyright © 2005-2021 RHO Software</span>
    <span>rho-TEST v.4.0.0.682</span>
    <span>Nr licencji: 2144/111111111111111</span>
    <span>2022-01-11, &nbsp;12:45:52</span>
</footer>

<form class="dialog" role="dialog" aria-label="MODUS">
    <div class="dialog-title">
        <svg class="ico"><use href="#logo"/></svg>MODUS
        <button type="button" class="close" aria-label="Zamknij"><svg viewBox="-1 0 12 10"><use href="#xmark" width="10" height="10"/></svg></button>
    </div>
    <div class="dialog-body">
        <div class="dialog-head"><h3>· EDYCJA WARTOŚCI CECHY MASZYNY ·</h3></div>
        <div class="field">
            <label for="feature">Wartość cechy</label>
            <input type="text" id="feature" value="1500-6000[mm]">
        </div>
        <div class="dialog-btns">
            <button type="button" class="ok"><svg><use href="#check"/></svg>Zatwierdź</button>
            <button type="button"><svg><use href="#cancel"/></svg>Anuluj</button>
        </div>
    </div>
</form>

<!-- step markers -->
<div class="marks">
    <div class="frame f1"></div>
    <div class="frame f2"></div>
    <div class="frame f3"></div>
    <div class="frame f4"></div>
    <div class="frame f5"></div>
    <svg class="arrows">
        <path d="M786 216L810 230 805 232 869 332 866 334 795 239 791 244z"/>
        <path d="M394 380L413 359 413 367 503 330 504 332 418 374 423 380z"/>
        <path d="M618 443L621 415 626 420 658 376 660 377 635 425 641 428z"/>
        <path d="M207 445L197 470 203 468 209 580 212 580 214 467 220 470z"/>
        <path d="M663 598L636 597 639 601 529 649 530 651 639 613 644 618z"/>
    </svg>
    <b class="dot d1">1</b>
    <b class="dot d2">2</b>
    <b class="dot d3">3</b>
    <b class="dot d4">4</b>
    <b class="dot d5">5</b>
</div>

<script>
    let feature = document.querySelector("#feature");
    feature.focus();
    feature.select();
</script>
</body>
</html>
```

FILE: styles.css
```css
* {
    box-sizing: border-box;
}
body {
    margin: 0;
    height: 100vh;
    display: flex;
    flex-direction: column;
    position: relative;
    overflow: hidden;
    background: #bbc7d8;
    color: #1e2a40;
    font: 11px/17px "DejaVu Sans Condensed", "DejaVu Sans", sans-serif;
}
button, input {
    font: inherit;
    color: inherit;
}
button {
    padding: 0;
}
a {
    color: inherit;
    text-decoration: none;
}
.sprite {
    position: absolute;
    width: 0;
    height: 0;
}
.ico {
    width: 14px;
    height: 14px;
    flex: none;
}
.tri {
    flex: none;
    width: 0;
    height: 0;
    border: 4px solid transparent;
}
.tri.up { border-width: 0 4px 4px; border-bottom-color: #8a93a6; }
.tri.dn { border-width: 4px 4px 0; border-top-color: #7c889f; }
.tri.lt { border-width: 4px 4px 4px 0; border-right-color: #8a93a6; }
.tri.rt { border-width: 4px 0 4px 4px; border-left-color: #8a93a6; }

/* title bar */
.titlebar {
    flex: none;
    display: flex;
    align-items: center;
    height: 23px;
    padding: 0 0 2px 2px;
    background: linear-gradient(#c9d0df, #dce1ea);
}
.titlebar .ico {
    width: 16px;
    height: 16px;
}
.titlebar h1 {
    flex: 1;
    margin: 0 0 0 4px;
    font-size: 12px;
    font-weight: normal;
    color: #667289;
}
.win-btns {
    display: flex;
    gap: 3px;
}
.win-btns button {
    width: 32px;
    height: 17px;
    border: 1px solid #98a4b7;
    border-radius: 2px;
    background: linear-gradient(#dce2eb, #c6cedb);
    display: flex;
    align-items: center;
    justify-content: center;
}
.win-btns svg {
    width: 12px;
    height: 11px;
    fill: #eef1f6;
    stroke: #8793a7;
}

/* top menu */
.menubar {
    flex: none;
    display: grid;
    grid-template-columns: repeat(8, 206fr) 81fr 30fr 30fr 30fr 100fr;
    height: 19px;
    border-bottom: 1px solid #9b9b9b;
    background: linear-gradient(#e6e9ef 0 50%, #d9dde6 50%);
    color: #535d72;
}
.menubar a {
    display: flex;
    align-items: center;
    gap: 2px;
    padding: 0 4px 0 6px;
    border-right: 1px solid #e8ebf0;
}
.menubar .tri {
    margin-left: auto;
}

.workspace {
    flex: 1;
    min-height: 0;
    display: flex;
}

/* left menu */
.sidebar {
    width: 185px;
    flex: none;
    display: flex;
    flex-direction: column;
}
.search {
    height: 20px;
    margin: 1px 1px 0;
    border: 1px solid #8d9ab0;
    background: #fff;
}
.sidebar h2 {
    margin: 0;
    padding-top: 2px;
    height: 25px;
    line-height: 24px;
    font-size: 16px;
    text-align: center;
}
.side-body {
    flex: 1;
    min-height: 0;
    display: flex;
    background: #2b3a57;
    overflow: hidden;
}
.side-list {
    flex: 1;
    min-width: 0;
    margin: -14px 12px 0;
    display: flex;
    flex-direction: column;
    gap: 2px;
    color: #fff;
}
.side-list svg {
    width: 20px;
    height: 20px;
    flex: none;
}
.group {
    flex: none;
    height: 25px;
    display: flex;
    align-items: center;
    gap: 5px;
    padding: 0 7px 0 11px;
    border: 0;
    background: linear-gradient(#4d6084, #3f5377);
    font-weight: bold;
    white-space: nowrap;
}
.side-list .chev {
    width: 11px;
    height: 11px;
    margin-left: auto;
}
.open .chev {
    transform: rotate(180deg);
}
.sub {
    padding: 7px 0 7px 14px;
    background: radial-gradient(#32456a 1px, transparent 1px) 0 0 / 4px 4px;
}
.sub a {
    height: 28px;
    display: flex;
    align-items: center;
    gap: 7px;
    white-space: nowrap;
}
.vscroll {
    width: 17px;
    flex: none;
    display: flex;
    flex-direction: column;
    align-items: center;
    justify-content: space-between;
    padding: 6px 1px;
    background: #e7e8ec;
}
.vscroll .thumb, .hscroll .thumb {
    border: 1px solid #9da8ba;
    border-radius: 2px;
    background: linear-gradient(90deg, #f1f3f7, #c9d1df);
    display: flex;
    align-items: center;
    justify-content: center;
}
.vscroll .thumb {
    width: 100%;
}
.thumb::after {
    content: "";
    width: 8px;
    height: 8px;
    background: repeating-linear-gradient(#69758b 0 1px, transparent 1px 3px);
}
.side-scroll {
    border-left: 1px solid #fff;
}
.side-scroll .thumb {
    height: 66%;
    margin-bottom: 188px;
}
.side-foot {
    flex: none;
    height: 21px;
    display: flex;
    align-items: center;
    gap: 4px;
    padding: 0 0 2px 2px;
    font-weight: bold;
}
.bug {
    width: 14px;
    height: 16px;
    margin: 0 0 4px auto;
}
.tickbox {
    appearance: none;
    width: 14px;
    height: 14px;
    margin: 0;
    flex: none;
    border: 1px solid #97a2b5;
    background: #fff;
}
.tickbox:checked::after {
    content: "";
    display: block;
    width: 10px;
    height: 10px;
    margin: 1px;
    background: #111;
    clip-path: polygon(0 50%, 18% 42%, 38% 68%, 84% 0, 100% 8%, 42% 100%);
}

/* splitters */
.split-v {
    width: 6px;
    flex: none;
    display: flex;
    align-items: center;
    justify-content: center;
}
.split-v.inner {
    width: 7px;
}
.split-v i {
    width: 2px;
    height: 14px;
    background: repeating-linear-gradient(#8594ad 0 2px, transparent 2px 4px);
}
.split-h {
    flex: none;
    height: 7px;
    display: flex;
    align-items: center;
    justify-content: center;
}
.split-h i {
    width: 14px;
    height: 2px;
    background: repeating-linear-gradient(90deg, #8594ad 0 2px, transparent 2px 4px);
}

/* document area */
.main {
    flex: 1;
    min-width: 0;
    display: flex;
    flex-direction: column;
    border-bottom: 1px solid #8d9bb4;
}
.doc-tabs {
    flex: none;
    display: flex;
    justify-content: space-between;
    height: 29px;
    padding: 1px 4px 0 3px;
    border-bottom: 1px solid #8f9db4;
}
.doc-tab {
    height: 28px;
    display: flex;
    align-items: center;
    gap: 10px;
    padding: 0 10px;
    border: 1px solid #8f9db4;
    border-bottom: 0;
    border-radius: 3px 3px 0 0;
    background: linear-gradient(#fffaec, #fdeebf 55%, #ffe3a0 60%);
}
.doc-tab button {
    width: 10px;
    height: 10px;
    border: 0;
    background: none;
    display: flex;
}
.doc-tab svg, .doc-ctl svg {
    width: 10px;
    height: 9px;
    fill: #6b7285;
}
.doc-ctl {
    display: flex;
    align-items: center;
    gap: 11px;
    height: 17px;
}
.doc {
    flex: 1;
    min-height: 0;
    display: flex;
    flex-direction: column;
    margin: 0 1px 0 0;
    padding: 0 2px 2px 3px;
    border-top: 4px solid #ffe3a0;
    border-bottom: 4px solid #ffe3a0;
}
.toolbar {
    flex: none;
    display: flex;
    align-items: center;
    gap: 2px;
    height: 45px;
    padding-top: 1px;
}
.tool, .small, .edit-btn, .tree-head button {
    border: 1px solid #8f9cb3;
    border-radius: 2px;
    background: linear-gradient(#f2f4f7, #dde1ea 45%, #cbd2df 50%, #d0d7e4);
    display: flex;
    align-items: center;
    justify-content: center;
}
.tool {
    height: 43px;
    min-width: 30px;
    padding: 4px 1px 0;
    flex-direction: column;
    justify-content: flex-start;
    gap: 2px;
    font: 11px/17px "Liberation Sans", Arial, sans-serif;
}
.tool.bare {
    justify-content: center;
    padding: 0;
}
.tool svg, .edit-btn svg {
    width: 16px;
    height: 16px;
}
.tool.bare svg, .strip.right svg {
    width: 14px;
    height: 14px;
}
.toolbar label {
    padding-left: 2px;
    font-weight: bold;
}
.find {
    width: 132px;
    height: 30px;
    margin-left: 4px;
    border: 1px solid #94a1b6;
    background: #d8dee7;
}
.small {
    width: 27px;
    height: 31px;
}
.small svg {
    width: 16px;
    height: 16px;
}
.small.pressed {
    background: #adbcd2;
}
.blank {
    width: 14px;
    height: 14px;
    margin: 4px 0 0 2px;
    border: 1px solid #abb7cb;
}
.push {
    flex: 1;
}

/* tree + grid */
.upper {
    flex: none;
    height: 211px;
    display: flex;
}
.tree {
    width: 183px;
    flex: none;
    display: flex;
    flex-direction: column;
    border: 2px solid #97a4ba;
}
.tree-head {
    height: 26px;
    flex: none;
    display: flex;
    align-items: center;
    justify-content: flex-end;
    border-bottom: 2px solid #97a4ba;
}
.tree-head button {
    width: 21px;
    height: 21px;
}
.tree-head svg {
    width: 17px;
    height: 17px;
}
.tree ul {
    flex: 1;
    min-height: 0;
    margin: 0;
    padding: 0;
    overflow: hidden;
    list-style: none;
    font-weight: bold;
    background: #f5f7fa;
}
.tree li {
    position: relative;
    height: 19px;
    padding-left: 21px;
    line-height: 19px;
}
.tree li:nth-child(even) {
    background: #eaf5ea;
}
.tree li::before {
    content: "";
    position: absolute;
    left: 9px;
    top: 0;
    width: 9px;
    height: 9px;
    border-left: 1px dotted #a9b2c1;
    border-bottom: 1px dotted #a9b2c1;
}
.tree .closed::after {
    content: "";
    position: absolute;
    left: 7px;
    top: 5px;
    border-left: 4px solid #4a566c;
    border-top: 4px solid transparent;
    border-bottom: 4px solid transparent;
}
.tree .opened::after {
    content: "";
    position: absolute;
    left: 7px;
    top: 6px;
    border-left: 6px solid transparent;
    border-bottom: 6px solid #3c475c;
}
.tree .leaf {
    display: flex;
    align-items: center;
    gap: 4px;
    padding-left: 39px;
    font-weight: normal;
}
.tree .leaf::before {
    left: 28px;
}
.leaf svg {
    width: 15px;
    height: 15px;
}
.gridbox {
    flex: 1;
    min-width: 0;
    display: flex;
}
.grid-area {
    flex: 1;
    min-width: 0;
    display: flex;
    flex-direction: column;
}
.group-panel {
    flex: none;
    height: 35px;
    padding: 10px 7px;
    border-bottom: 1px solid #aeb8cb;
    background: #c8d1e2;
    color: #98a4b9;
}
.grid-clip {
    flex: none;
    height: 126px;
    overflow: hidden;
}
.grid {
    width: 100%;
    table-layout: fixed;
    border-collapse: separate;
    border-spacing: 0;
}
.grid col {
    width: 100px;
}
.grid .ind {
    width: 12px;
}
.grid .wide {
    width: 150px;
}
.grid .last {
    width: auto;
}
.grid th, .grid td {
    height: 17px;
    padding: 0 0 0 1px;
    text-align: left;
    font-weight: normal;
    white-space: nowrap;
    overflow: hidden;
}
.grid th {
    height: 19px;
    border-right: 1px solid #cbd1dc;
    background: linear-gradient(#eaedf2 0 50%, #d8dde6 50%);
    color: #535d72;
}
.grid td {
    background: #f5f7fa;
}
.grid tbody tr:nth-child(odd) td {
    background: #ebf6ec;
}
.grid tbody .filter td {
    border-bottom: 2px solid #aab4cd;
    height: 19px;
    text-align: center;
    color: #707a80;
}
.grid tbody .sel td {
    background: #fff5dd;
}
.grid tr > :first-child {
    border-right: 0;
}
.grid tbody tr td:first-child, .grid tbody .filter td:first-child {
    background: linear-gradient(#dfe3ec, #d0d6e2);
    color: #1e2a40;
}
.grid .tri {
    display: block;
    margin-left: 3px;
    border-left-color: #1e2a40;
}
.grid-foot {
    flex: none;
    height: 34px;
    padding: 3px 14px;
    border-top: 1px solid #a9b4c9;
    background: linear-gradient(#e4e8ee 0 50%, #d9dde6 50%);
}
.grid-foot span {
    display: block;
    width: 96px;
    height: 26px;
    padding: 4px 9px;
    border: 1px solid #c4cbd8;
    background: #fff;
}
.hscroll {
    flex: 1;
    display: flex;
    align-items: center;
    gap: 8px;
    padding: 0 6px;
    border-top: 1px solid #f3f4f7;
    background: #e6e7ea;
}
.hscroll .thumb {
    width: 594px;
    height: 14px;
    margin-right: auto;
    background: linear-gradient(#f1f3f7, #c9d1df);
}
.hscroll .thumb::after {
    background: repeating-linear-gradient(90deg, #69758b 0 1px, transparent 1px 3px);
}
.grid-scroll {
    height: 195px;
    width: 16px;
}
.grid-scroll .thumb {
    height: 114px;
    margin-bottom: 48px;
}

.toggle {
    flex: none;
    height: 17px;
    border: 1px solid #8f9cb3;
    border-radius: 2px;
    background: linear-gradient(#f6f7f9, #d9dee8 55%, #ccd3e0 60%);
    font-size: 12px;
    line-height: 13px;
    font-weight: bold;
}

/* detail tabs */
.tabs {
    flex: none;
    padding: 0 4px 0 3px;
    border-bottom: 4px solid #ffe3a0;
}
.tab-row {
    display: grid;
    gap: 1px;
    height: 26px;
}
.first {
    grid-template-columns: 183fr 162fr 200fr 241fr 143fr 157fr 159fr 165fr 157fr 140fr;
}
.second {
    grid-template-columns: 192fr 131fr 179fr 210fr 172fr 149fr 136fr 235fr 168fr 138fr;
}
.tab-row button {
    display: flex;
    align-items: center;
    justify-content: center;
    gap: 6px;
    border: 1px solid #8f9db4;
    border-left-color: #eef1f5;
    border-radius: 2px 2px 0 0;
    background: linear-gradient(#f3f4f8, #dee2ea 45%, #cfd6e2 50%);
}
.tab-row svg {
    width: 16px;
    height: 16px;
}
.tab-row .on {
    border-bottom: 0;
    background: linear-gradient(#fffaec, #fdeebf 50%, #ffe3a0 55%);
}
.detail {
    flex: 1;
    min-height: 0;
    display: flex;
    padding-bottom: 1px;
    border-bottom: 4px solid #ffe3a0;
}
.strip {
    width: 33px;
    flex: none;
    padding: 1px 0 0 2px;
}
.strip.right {
    padding-left: 0;
}
.edit-btn {
    width: 26px;
    height: 28px;
}
.strip.right .edit-btn {
    width: 31px;
}
.sheet {
    flex: 1;
    min-width: 0;
    border-top: 1px solid #b9c0c9;
    background: #fff;
}
.specs {
    width: 412px;
}
.specs col {
    width: 200px;
}

/* status bar */
.status {
    flex: none;
    display: grid;
    grid-template-columns: 593fr 593fr 593fr 141fr;
    height: 17px;
    background: linear-gradient(#eceef2 0 50%, #d9dde6 50%);
    color: #535d72;
}
.status span {
    padding: 0 4px;
    border-right: 1px solid #e4e7ed;
}
.status span:last-child {
    text-align: right;
}

/* dialog */
.dialog {
    position: absolute;
    left: 669px;
    top: 472px;
    width: 424px;
    padding: 2px 7px 7px;
    border: 1px solid #29334a;
    background: linear-gradient(#8f9fb6, #c3ccdb 28px, #ccd4e0);
}
.dialog-title {
    display: flex;
    align-items: center;
    height: 26px;
    gap: 5px;
    font-size: 12px;
}
.dialog-title .ico {
    width: 16px;
    height: 16px;
}
.close {
    width: 31px;
    height: 16px;
    margin-left: auto;
    border: 1px solid #5b2024;
    background: linear-gradient(#dd9a92, #c8675b 50%, #b5402f 50%, #c66a55);
    display: flex;
    align-items: center;
    justify-content: center;
}
.close svg {
    width: 12px;
    height: 10px;
    fill: #fff;
    stroke: #5a4a55;
    stroke-width: .7;
}
.dialog-body {
    background: #bbc7d8;
}
.dialog-head {
    height: 30px;
    padding-top: 5px;
    border: 1px solid #8f9db4;
    background: #edeff4;
}
.dialog-head h3 {
    display: inline-block;
    margin: 0;
    padding: 0 1px;
    border: 1px solid #8f9db4;
    border-left: 0;
    font-size: 13px;
    line-height: 16px;
}
.field {
    display: flex;
    align-items: center;
    gap: 6px;
    height: 45px;
    padding: 0 5px 14px 14px;
}
.field input {
    flex: 1;
    min-width: 0;
    height: 21px;
    padding: 0 1px;
    border: 2px solid #8391a8;
    outline: 0;
    background: #fff;
    font-size: 11px;
    font-weight: bold;
}
.field input::selection {
    background: #0078d7;
    color: #fff;
}
.field label {
    color: #3c475c;
}
.dialog-btns {
    display: flex;
    justify-content: space-between;
    padding: 4px 10px 6px;
    background: #edeff4;
}
.dialog-btns button {
    width: 100px;
    height: 30px;
    border: 1px solid #a9b3c5;
    border-radius: 2px;
    background: linear-gradient(#f2f4f7, #dde1ea 45%, #cdd4e0 55%);
    display: flex;
    align-items: center;
    justify-content: center;
    gap: 4px;
    font: bold 12px/17px "Liberation Sans", Arial, sans-serif;
}
.dialog-btns .ok {
    border-color: #d8cfa8;
}
.dialog-btns svg {
    width: 16px;
    height: 16px;
}

/* step markers */
.marks {
    position: absolute;
    left: 0;
    top: 0;
    width: 100%;
    height: 100%;
    pointer-events: none;
}
.arrows {
    position: absolute;
    width: 100%;
    height: 100%;
    fill: #f00;
    filter: drop-shadow(2px 2px 3px rgba(0, 0, 0, .5));
}
.frame {
    position: absolute;
    border: 2px solid #f01010;
    border-radius: 5px;
    box-shadow: 2px 3px 6px rgba(0, 0, 0, .3), inset 2px 3px 6px rgba(0, 0, 0, .2);
}
.f1 { left: 379px; top: 190px; width: 1338px; height: 27px; }
.f2 { left: 193px; top: 377px; width: 199px; height: 33px; }
.f3 { left: 234px; top: 444px; width: 410px; height: 27px; }
.f4 { left: 194px; top: 412px; width: 35px; height: 33px; }
.f5 { left: 664px; top: 469px; width: 433px; height: 160px; box-shadow: 2px 3px 6px rgba(0, 0, 0, .3); }
.dot {
    position: absolute;
    width: 30px;
    height: 30px;
    border: 2px solid #f01010;
    border-radius: 50%;
    background: rgba(214, 40, 44, .85);
    box-shadow: 1px 2px 5px rgba(0, 0, 0, .45);
    color: #fff;
    font: 14px/26px "Noto Sans", sans-serif;
    text-align: center;
}
.d1 { left: 862px; top: 328px; }
.d2 { left: 501px; top: 304px; }
.d3 { left: 652px; top: 347px; }
.d4 { left: 193px; top: 580px; }
.d5 { left: 501px; top: 640px; }
```
